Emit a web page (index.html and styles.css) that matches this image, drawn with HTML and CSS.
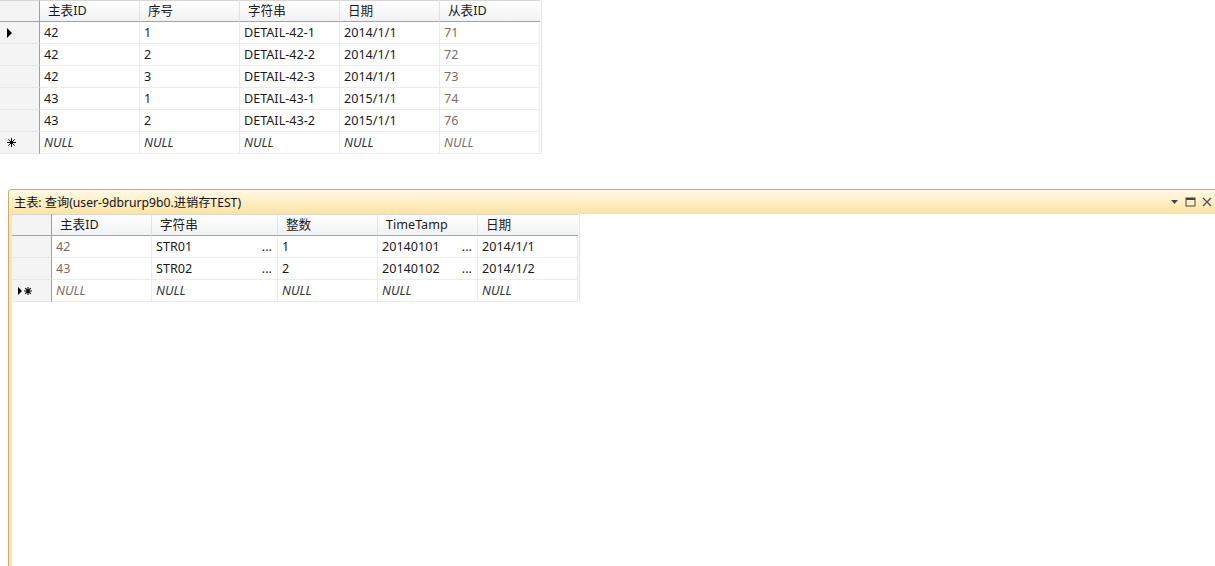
FILE: index.html
```html
<!DOCTYPE html>
<html>
<head>
<meta charset="utf-8">
<link rel="stylesheet" href="styles.css">
</head>
<body>
<div class="grid grid-top">
  <div class="hc corner"></div>
  <div class="hc">主表ID</div>
  <div class="hc">序号</div>
  <div class="hc">字符串</div>
  <div class="hc">日期</div>
  <div class="hc">从表ID</div>

  <div class="rh"><span class="tri"></span></div>
  <div class="c">42</div><div class="c">1</div><div class="c">DETAIL-42-1</div><div class="c">2014/1/1</div><div class="c ro">71</div>
  <div class="rh"></div>
  <div class="c">42</div><div class="c">2</div><div class="c">DETAIL-42-2</div><div class="c">2014/1/1</div><div class="c ro">72</div>
  <div class="rh"></div>
  <div class="c">42</div><div class="c">3</div><div class="c">DETAIL-42-3</div><div class="c">2014/1/1</div><div class="c ro">73</div>
  <div class="rh"></div>
  <div class="c">43</div><div class="c">1</div><div class="c">DETAIL-43-1</div><div class="c">2015/1/1</div><div class="c ro">74</div>
  <div class="rh"></div>
  <div class="c">43</div><div class="c">2</div><div class="c">DETAIL-43-2</div><div class="c">2015/1/1</div><div class="c ro">76</div>
  <div class="rh"><svg class="star" width="9" height="9" viewBox="0 0 9 9"><path d="M4.5 0v9M0 4.5h9M1.3 1.3l6.4 6.4M7.7 1.3L1.3 7.7" stroke="#000" stroke-width="1"/></svg></div>
  <div class="c null">NULL</div><div class="c null">NULL</div><div class="c null">NULL</div><div class="c null">NULL</div><div class="c null ro">NULL</div>
</div>

<div class="panel">
  <div class="titlebar">
    <span class="title">主表: 查询(user-9dbrurp9b0.进销存TEST)</span>
    <div class="tools">
      <svg width="9" height="6" viewBox="0 0 9 6"><path d="M1 1h7L4.5 5z" fill="#444"/></svg>
      <svg width="11" height="10" viewBox="0 0 11 10"><rect x="1" y="1" width="9" height="8" fill="none" stroke="#444" stroke-width="1"/><rect x="1" y="1" width="9" height="2" fill="#444"/></svg>
      <svg width="10" height="10" viewBox="0 0 10 10"><path d="M1 1L9 9M9 1L1 9" stroke="#555" stroke-width="1.4"/></svg>
    </div>
  </div>
  <div class="panel-body">
    <div class="grid grid-main">
      <div class="hc corner"></div>
      <div class="hc">主表ID</div>
      <div class="hc">字符串</div>
      <div class="hc">整数</div>
      <div class="hc">TimeTamp</div>
      <div class="hc">日期</div>

      <div class="rh"></div>
      <div class="c ro">42</div><div class="c ell"><span>STR01</span><span>...</span></div><div class="c">1</div><div class="c ell"><span>20140101</span><span>...</span></div><div class="c">2014/1/1</div>
      <div class="rh"></div>
      <div class="c ro">43</div><div class="c ell"><span>STR02</span><span>...</span></div><div class="c">2</div><div class="c ell"><span>20140102</span><span>...</span></div><div class="c">2014/1/2</div>
      <div class="rh rh-new"><span class="tri small"></span><svg class="star" width="8" height="8" viewBox="0 0 8 8"><path d="M4 0v8M0 4h8M1.2 1.2l5.6 5.6M6.8 1.2L1.2 6.8" stroke="#000" stroke-width="1.1"/></svg></div>
      <div class="c null ro">NULL</div><div class="c null">NULL</div><div class="c null">NULL</div><div class="c null">NULL</div><div class="c null">NULL</div>
    </div>
  </div>
</div>
</body>
</html>
```

FILE: styles.css
```css
html, body {
  margin: 0;
  padding: 0;
  background: #fff;
  overflow: hidden;
  height: 566px;
}
body {
  font-family: "Noto Sans", "Noto Sans CJK SC", sans-serif;
  font-size: 12.6px;
  color: #1a1a1a;
  display: flex;
  flex-direction: column;
}
.grid {
  display: grid;
  grid-auto-rows: 22px;
}
.grid-top {
  grid-template-columns: 40px repeat(5, 100px);
  width: 541px;
  border-right: 1px solid #e4e4e4;
}
.grid-main {
  grid-template-columns: 40px 100px 126px 100px 100px 100px;
  width: 567px;
  border-right: 1px solid #e4e4e4;
}
.hc {
  background: linear-gradient(#ffffff, #f1f2f4);
  border-bottom: 1px solid #a4a4a4;
  border-right: 1px solid #e2e2e2;
  border-top: 1px solid #d6d6d6;
  padding-left: 8px;
  display: flex;
  align-items: center;
  color: #1a1a1a;
  line-height: 1;
}
.hc.corner {
  padding: 0;
  border-right: 1px solid #a0a0a0;
  background: #f4f4f4;
}
.grid > .hc:nth-child(6) {
  border-right: none;
}
.rh {
  background: #f4f4f4;
  border-right: 1px solid #a0a0a0;
  border-bottom: 1px solid #e8e8e8;
  display: flex;
  align-items: center;
  padding-left: 7px;
  gap: 1px;
}
.rh-new {
  padding-left: 6px;
  gap: 2px;
}
.c {
  border-right: 1px solid #ebebeb;
  border-bottom: 1px solid #ebebeb;
  padding-left: 4px;
  display: flex;
  align-items: center;
  white-space: nowrap;
  overflow: hidden;
}
.c.ro { color: #7d6f60; }
.null { font-style: italic; color: #333; }
.null.ro { color: #7d6f60; }
.c.ell {
  justify-content: space-between;
  padding-right: 5px;
}
.tri {
  width: 0; height: 0;
  border-top: 5px solid transparent;
  border-bottom: 5px solid transparent;
  border-left: 5px solid #000;
}
.tri.small {
  border-top-width: 4px;
  border-bottom-width: 4px;
  border-left-width: 4px;
}
.star {
  display: block;
}
.panel {
  margin-top: 35px;
  margin-left: 8px;
  flex: 1;
  border-left: 1px solid #c7ab74;
  border-top: 1px solid #c7ab74;
  border-top-left-radius: 4px;
  display: flex;
  flex-direction: column;
}
.titlebar {
  height: 24px;
  background: linear-gradient(#fff9e6, #fef0c7 45%, #fde3a2);
  display: flex;
  align-items: center;
  padding-left: 5px;
  border-top-left-radius: 3px;
}
.title {
  flex: 1;
  color: #111;
  font-size: 12.2px;
}
.tools {
  display: flex;
  align-items: center;
  gap: 6px;
  padding-right: 3px;
}
.panel-body {
  flex: 1;
  border-left: 3px solid #fde6aa;
  background: #fff;
}
```
